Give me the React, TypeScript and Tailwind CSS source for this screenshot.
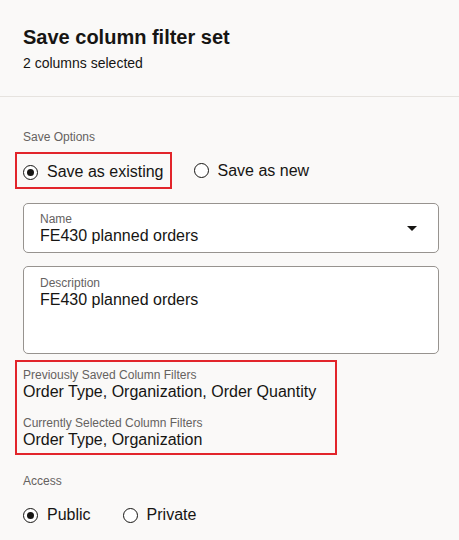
import React from 'react';

const font = { fontFamily: '"Liberation Sans", Arial, sans-serif' };

function Radio({ label, checked }: { label: string; checked?: boolean }) {
  return (
    <div className="flex h-6 items-center">
      <span className="flex h-[15px] w-[15px] items-center justify-center rounded-full border-[1.5px] border-[#161513] bg-white">
        {checked && <span className="h-[7px] w-[7px] rounded-full bg-[#161513]" />}
      </span>
      <span className="ml-[9px] text-[16px] leading-6">{label}</span>
    </div>
  );
}

function Caret() {
  return (
    <svg width="10" height="5" viewBox="0 0 10 5" className="shrink-0">
      <path d="M0 0h10L5 5z" fill="#161513" />
    </svg>
  );
}

export default function App() {
  return (
    <div style={font} className="w-[459px] h-[540px] overflow-hidden bg-[#faf9f8] text-[#161513]">
      <div className="px-[23px] pt-[25px] pb-[23px] border-b border-[#e6e3df]">
        <h1 className="text-[20px] leading-6 font-bold">Save column filter set</h1>
        <p className="mt-1 text-[14px] leading-5">2 columns selected</p>
      </div>

      <div className="pl-[23px] pr-[20px] pt-[32px]">
        <div className="text-[12px] leading-4 text-[#65625f]">Save Options</div>

        <div className="mt-[7px] flex items-center">
          <div className="-ml-2 border-2 border-[#e2252b] pl-[6px] pr-[6px] pt-[6px] pb-[3px]">
            <Radio label="Save as existing" checked />
          </div>
          <div className="ml-[22px]">
            <Radio label="Save as new" />
          </div>
        </div>

        <div className="mt-[14px] flex h-[50px] items-center rounded-[5px] border border-[#97938f] bg-white pl-[16px] pr-[21px]">
          <div className="flex-1 self-start pt-[8px]">
            <div className="text-[12px] leading-[14px] text-[#65625f]">Name</div>
            <div className="text-[16px] leading-5">FE430 planned orders</div>
          </div>
          <Caret />
        </div>

        <div className="mt-[13px] h-[88px] rounded-[5px] border border-[#97938f] bg-white pl-[16px] pt-[9px]">
          <div className="text-[12px] leading-[14px] text-[#65625f]">Description</div>
          <div className="text-[16px] leading-5">FE430 planned orders</div>
        </div>

        <div className="-ml-2 mt-[6px] w-[322px] border-2 border-[#e2252b] pl-[6px] pt-[6px] pb-[3px]">
          <div className="text-[12px] leading-[14px] text-[#65625f]">Previously Saved Column Filters</div>
          <div className="text-[16px] leading-5">Order Type, Organization, Order Quantity</div>
          <div className="mt-[14px] text-[12px] leading-[14px] text-[#65625f]">Currently Selected Column Filters</div>
          <div className="text-[16px] leading-5">Order Type, Organization</div>
        </div>

        <div className="mt-[19px] text-[12px] leading-[14px] text-[#65625f]">Access</div>
        <div className="mt-[15px] flex items-center gap-[32px]">
          <Radio label="Public" checked />
          <Radio label="Private" />
        </div>
      </div>
    </div>
  );
}
